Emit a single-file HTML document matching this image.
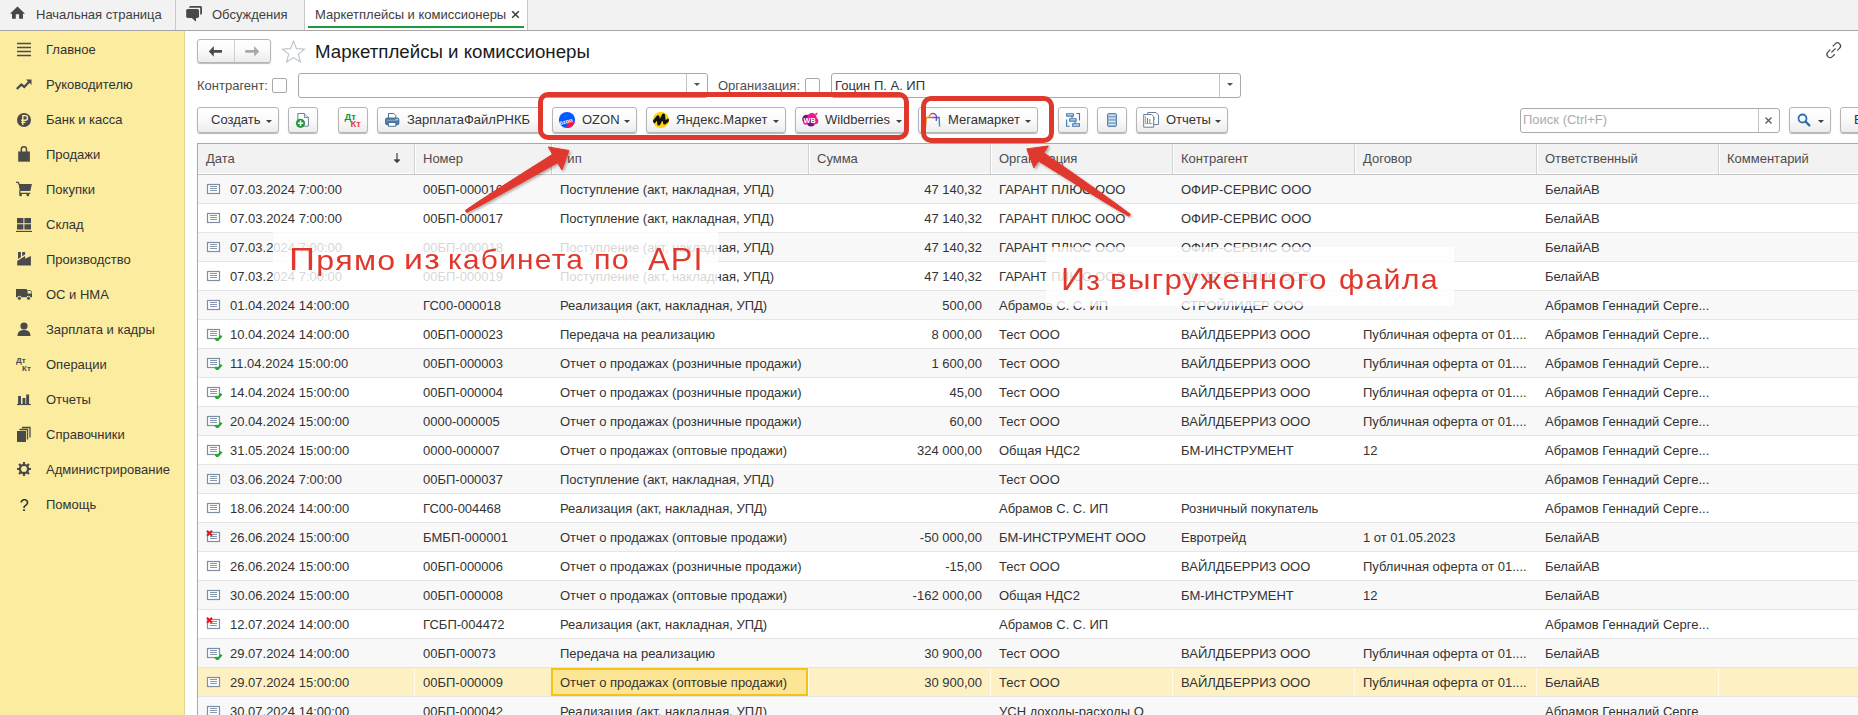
<!DOCTYPE html>
<html><head><meta charset="utf-8">
<style>
*{box-sizing:border-box;margin:0;padding:0}
html,body{width:1858px;height:715px;overflow:hidden;background:#fff;font-family:"Liberation Sans",sans-serif;font-size:13px;color:#333}
.abs{position:absolute}
svg{position:absolute;display:block}
#tabs{position:absolute;left:0;top:0;width:1858px;height:31px;background:#f2f2f2;border-bottom:1px solid #a6a6a6}
.tab{position:absolute;top:0;height:30px;line-height:30px;color:#404040;font-size:13px;white-space:nowrap}
.tsep{position:absolute;top:0;width:1px;height:30px;background:#c8c8c8}
#side{position:absolute;left:0;top:31px;width:185px;height:684px;background:#fbeca0;border-right:1px solid #e3d58e}
.si{position:absolute;left:46px;color:#333;font-size:13px;line-height:15px;white-space:nowrap}
.sic{position:absolute;left:16px}
.btn{position:absolute;top:107px;height:26px;border:1px solid #b5b5b5;border-radius:3px;background:linear-gradient(#fff 0%,#fafafa 50%,#ececec 100%);box-shadow:0 1px 1px rgba(0,0,0,.28);white-space:nowrap;color:#333;font-size:13px;line-height:24px}
.bt{position:absolute;top:0}
.dd{position:absolute;top:12px;width:0;height:0;border-left:3px solid transparent;border-right:3px solid transparent;border-top:3.5px solid #404040}
.inp{position:absolute;top:73px;height:25px;border:1px solid #a9a9a9;border-radius:3px;background:#fff}
.chk{position:absolute;top:78px;width:15px;height:15px;border:1px solid #a8a8a8;border-radius:2px;background:#fff}
.lbl{position:absolute;top:78px;line-height:15px;color:#4d4d4d;font-size:13px;white-space:nowrap}
#gridbox{position:absolute;left:197px;top:143px;width:1661px;height:572px;border-left:1px solid #a9a9a9;border-top:1px solid #a9a9a9}
.hd{position:absolute;left:198px;top:144px;height:31px;width:1660px;background:#f2f2f2;border-bottom:1px solid #c4c4c4;box-shadow:inset 0 -1px 0 #fff}
.hc{position:absolute;top:144px;height:30px;line-height:30px;color:#4d4d4d;white-space:nowrap}
.hs{position:absolute;top:144px;width:2px;height:30px;border-left:1px solid #d2d2d2;border-right:1px solid #fff}
.row{position:absolute;left:198px;width:1660px;height:29px}
.row>*{margin-left:-198px}
.row::after{content:"";position:absolute;left:0;right:0;bottom:0;height:1px;background:#e6e6e6}
.row.g{background:#f8f8f8}
.row.sel{background:#fdf1c4}
.vs{position:absolute;top:0;width:1px;height:28px;background:#fffbe8}
.selcell{position:absolute;left:551px;top:0;width:257px;height:28px;border:2px solid #f5c318;background:#fde596}
.icw{position:absolute;top:7px;width:18px;height:14px}
.c{position:absolute;top:0;height:29px;line-height:29px;white-space:nowrap;color:#333}
.r{text-align:right}
.redbox{position:absolute;border:5px solid #e0382d;border-radius:10px}
.note{position:absolute;background:rgba(255,255,255,.8)}
.notet{position:absolute;color:#e0382d;white-space:nowrap;font-family:"Liberation Sans",sans-serif;font-size:28.5px;line-height:30px;letter-spacing:1.2px;transform-origin:0 0}
</style></head><body>
<div id="tabs">
  <svg style="left:0;top:0" width="30" height="30" viewBox="0 0 30 30"><path d="M17.5 6.5L25 13.7H23V18.8H19.1V14.2H15.8V18.8H12V13.7H10z" fill="#484848"/></svg>
  <div class="tab" style="left:36px">Начальная страница</div>
  <div class="tsep" style="left:175px"></div>
  <svg style="left:178px;top:0" width="30" height="30" viewBox="178 0 30 30"><rect x="186.2" y="9" width="12.8" height="8.9" rx="1.6" fill="#484848"/><path d="M191.3 17.5L196 21.8V17.5z" fill="#484848"/><path d="M189.1 7.8V7.6Q189.1 6.1 190.6 6.1H200.5Q202 6.1 202 7.6V13.3Q202 14.7 200.6 14.7H200.2V7.8z" fill="#484848"/></svg>
  <div class="tab" style="left:212px">Обсуждения</div>
  <div class="tsep" style="left:304px"></div>
  <div class="abs" style="left:305px;top:0;width:222px;height:30px;background:#fff"></div>
  <div class="tab" style="left:315px">Маркетплейсы и комиссионеры</div>
  <svg style="left:511px;top:10px" width="9" height="9" viewBox="0 0 9 9"><path d="M1.2 1.2l6.6 6.6M7.8 1.2L1.2 7.8" stroke="#404040" stroke-width="1.6"/></svg>
  <div class="abs" style="left:308px;top:26px;width:216px;height:2px;background:#1a9c3e"></div>
  <div class="tsep" style="left:527px"></div>
</div>
<div id="side">
<div class="si" style="top:11px">Главное</div>
<svg class="sic" style="top:10px" width="16" height="16" viewBox="0 0 16 16"><path d="M1 2.5h14M1 6.5h14M1 10.5h14M1 14.5h14" stroke="#4a4a4a" stroke-width="1.3"/></svg>
<div class="si" style="top:46px">Руководителю</div>
<svg class="sic" style="top:45px" width="16" height="16" viewBox="0 0 16 16"><path d="M0.8 13l4.5-4.5 3 2.5 4.8-5.2" fill="none" stroke="#4a4a4a" stroke-width="2.3"/><path d="M10 3.5h5.5v5.5z" fill="#4a4a4a"/></svg>
<div class="si" style="top:81px">Банк и касса</div>
<svg class="sic" style="top:80px" width="16" height="16" viewBox="0 0 16 16"><circle cx="8" cy="9" r="7" fill="#4a4a4a"/><path d="M6.8 14V4.6h2.4a2.3 2.3 0 0 1 0 4.6H5.2M5.2 11.4h4.2" fill="none" stroke="#fbeca0" stroke-width="1.4"/></svg>
<div class="si" style="top:116px">Продажи</div>
<svg class="sic" style="top:115px" width="16" height="16" viewBox="0 0 16 16"><path d="M2.2 5.5h11.7v10.2H2.2z" fill="#4a4a4a"/><path d="M5.3 6.5V3.4a2.6 2.6 0 0 1 5.2 0v3.1" fill="none" stroke="#4a4a4a" stroke-width="1.5"/></svg>
<div class="si" style="top:151px">Покупки</div>
<svg class="sic" style="top:150px" width="16" height="16" viewBox="0 0 16 16"><path d="M0 1.3H2.3L3.6 4" fill="none" stroke="#4a4a4a" stroke-width="1.3"/><path d="M2.6 2.9H15.9L14.3 9.9H3.8z" fill="#4a4a4a"/><path d="M3.8 9.5V12.3H14.3" fill="none" stroke="#4a4a4a" stroke-width="1.2"/><circle cx="4.6" cy="13.9" r="1.4" fill="#4a4a4a"/><circle cx="11.8" cy="13.9" r="1.4" fill="#4a4a4a"/></svg>
<div class="si" style="top:186px">Склад</div>
<svg class="sic" style="top:185px" width="16" height="16" viewBox="0 0 16 16"><path d="M1 2h6.4v5.3H1zM8.4 2H15v5.3H8.4zM1 8.3h6.4v5.3H1zM8.4 8.3H15v5.3H8.4z" fill="#4a4a4a"/><path d="M0 15.6h16" stroke="#4a4a4a" stroke-width="1.5"/></svg>
<div class="si" style="top:221px">Производство</div>
<svg class="sic" style="top:220px" width="16" height="16" viewBox="0 0 16 16"><path d="M1.2 14.5V10L9.1 4.9V7.8L14.9 4.9V14.5z" fill="#4a4a4a"/><path d="M2 1H4.9V6.2L2 8z" fill="#4a4a4a"/><path d="M6.2 1H9.1V3.4L6.2 5.3z" fill="#4a4a4a"/></svg>
<div class="si" style="top:256px">ОС и НМА</div>
<svg class="sic" style="top:255px" width="16" height="16" viewBox="0 0 16 16"><path d="M0 3h10.8v8.2H0zM10.8 4.3h3.9l1.6 2v4.9h-5.5z" fill="#4a4a4a"/><path d="M11.6 5.1h2.8l1 1.3v1.2h-3.8z" fill="#fbeca0"/><circle cx="3.4" cy="12.3" r="2" fill="#4a4a4a" stroke="#fbeca0" stroke-width="1"/><circle cx="12.5" cy="12.3" r="2" fill="#4a4a4a" stroke="#fbeca0" stroke-width="1"/></svg>
<div class="si" style="top:291px">Зарплата и кадры</div>
<svg class="sic" style="top:290px" width="16" height="16" viewBox="0 0 16 16"><circle cx="8" cy="5" r="3.6" fill="#4a4a4a"/><path d="M1.5 15c0-4.5 3-6 6.5-6s6.5 1.5 6.5 6z" fill="#4a4a4a"/></svg>
<div class="si" style="top:326px">Операции</div>
<svg class="sic" style="top:325px" width="16" height="16" viewBox="0 0 16 16"><text x="0" y="7" font-family="Liberation Sans" font-weight="bold" font-size="8" fill="#4a4a4a">Дт</text><text x="6" y="15" font-family="Liberation Sans" font-weight="bold" font-size="8" fill="#4a4a4a">Кт</text></svg>
<div class="si" style="top:361px">Отчеты</div>
<svg class="sic" style="top:360px" width="16" height="16" viewBox="0 0 16 16"><path d="M2.1 4.9H5V13H2.1zM6.5 7H9.4V13H6.5zM10.2 3.4H13.1V13H10.2z" fill="#4a4a4a"/><path d="M1 13.5h13.8" stroke="#4a4a4a" stroke-width="1.1"/></svg>
<div class="si" style="top:396px">Справочники</div>
<svg class="sic" style="top:395px" width="16" height="16" viewBox="0 0 16 16"><path d="M1 5h9v11H1z" fill="#4a4a4a"/><path d="M3.5 3.5h8v10M6 1.5h8v10" fill="none" stroke="#4a4a4a" stroke-width="1.3"/></svg>
<div class="si" style="top:431px">Администрирование</div>
<svg class="sic" style="top:430px" width="16" height="16" viewBox="0 0 16 16"><g transform="translate(8 8)"><circle r="4.1" fill="none" stroke="#4a4a4a" stroke-width="2.3"/><path d="M0-7v2.6M0 4.4V7M-7 0h2.6M4.4 0H7M-4.95-4.95l1.8 1.8M3.15 3.15l1.8 1.8M-4.95 4.95l1.8-1.8M3.15-3.15l1.8-1.8" stroke="#4a4a4a" stroke-width="2.2"/></g></svg>
<div class="si" style="top:466px">Помощь</div>
<svg class="sic" style="top:465px" width="16" height="16" viewBox="0 0 16 16"><text x="3.8" y="14.5" font-family="Liberation Sans" font-size="16" fill="#222">?</text></svg>
</div>

<!-- nav -->
<div class="btn" style="left:197px;top:39px;width:74px;height:24px"></div>
<div class="abs" style="left:234px;top:40px;width:1px;height:22px;background:#d0d0d0"></div>
<svg style="left:208px;top:45px" width="16" height="13" viewBox="0 0 16 13"><path d="M0.8 6.4L5.8 1.1V5h8.2v2.8H5.8v3.9z" fill="#4a4a4a"/></svg>
<svg style="left:244px;top:45px" width="16" height="13" viewBox="0 0 16 13"><path d="M15.2 6.4L10.2 1.1V5H1.2v2.8h9v3.9z" fill="#a9a9a9"/></svg>
<svg style="left:281px;top:40px" width="25" height="23" viewBox="0 0 25 23"><path d="M12.5 1l3 7.6 8 .5-6.2 5.1 2.1 7.8-6.9-4.4-6.9 4.4 2.1-7.8L1.5 9.1l8-.5z" fill="#fff" stroke="#b9c3cc" stroke-width="1.1"/></svg>
<div class="abs" style="left:315px;top:41px;font-size:18.7px;line-height:22px;color:#1a1a1a;white-space:nowrap">Маркетплейсы и комиссионеры</div>
<svg style="left:1820px;top:38px" width="26" height="24" viewBox="1820 38 26 24"><path d="M1832.7 46.3L1835.2 43.8A3.1 3.1 0 0 1 1839.6 48.2L1837.2 50.7M1834.8 54.2L1832.3 56.6A3.1 3.1 0 0 1 1827.9 52.2L1830.3 49.7M1831.4 52.5L1835.6 48.3" fill="none" stroke="#4a4a4a" stroke-width="1.2"/></svg>

<!-- filter row -->
<div class="lbl" style="left:197px">Контрагент:</div>
<div class="chk" style="left:272px"></div>
<div class="inp" style="left:298px;width:410px"></div>
<div class="abs" style="left:686px;top:74px;width:1px;height:23px;background:#c4c4c4"></div>
<div class="dd" style="left:694px;top:83px;border-top-color:#555"></div>
<div class="lbl" style="left:718px">Организация:</div>
<div class="chk" style="left:805px"></div>
<div class="inp" style="left:831px;width:410px"></div>
<div class="abs" style="left:1219px;top:74px;width:1px;height:23px;background:#c4c4c4"></div>
<div class="dd" style="left:1227px;top:83px;border-top-color:#555"></div>
<div class="lbl" style="left:835px;color:#333">Гоцин П. А. ИП</div>

<!-- toolbar -->
<div class="btn" style="left:197px;width:82px"><span class="bt" style="left:13px">Создать</span><i class="dd" style="left:68px"></i></div>
<div class="btn" style="left:288px;width:30px"><svg style="left:0;top:0" width="28" height="24" viewBox="289 108 28 24"><path d="M297.8 113.5h6.6l4 4v8.6h-10.6z" fill="#fff" stroke="#6b7f99" stroke-width="1"/><path d="M304.4 113.5v4h4" fill="#dfe6ee" stroke="#6b7f99" stroke-width="0.9"/><circle cx="300.5" cy="123.3" r="4.6" fill="#1f9a3a"/><path d="M300.5 120.6v5.4M297.8 123.3h5.4" stroke="#fff" stroke-width="1.5"/></svg></div>
<div class="btn" style="left:338px;width:30px"><svg style="left:0;top:0" width="28" height="24" viewBox="339 108 28 24"><text x="344.6" y="119.8" font-family="Liberation Sans" font-weight="bold" font-size="9.4" fill="#12953c">Дт</text><text x="350.6" y="127" font-family="Liberation Sans" font-weight="bold" font-size="9.4" fill="#e23f3a">Кт</text></svg></div>
<div class="btn" style="left:377px;width:165px"><svg style="left:0;top:0" width="28" height="24" viewBox="378 108 28 24"><path d="M388.5 113.5h5.3l2 2v3h-7.3z" fill="#fff" stroke="#4a6f96" stroke-width="1"/><rect x="385.5" y="118" width="13.4" height="6.8" rx="1.6" fill="#4b78a6" stroke="#3a628c" stroke-width="0.8"/><path d="M386.8 120.2h10.8" stroke="#9dbbd8" stroke-width="0.8"/><path d="M395.6 119.3h1.2M397.3 119.3h.8" stroke="#fff" stroke-width="0.9"/><path d="M388.5 122.5h7.3v3.8h-7.3z" fill="#fff" stroke="#4a6f96" stroke-width="1"/></svg><span class="bt" style="left:29px">ЗарплатаФайлРНКБ</span></div>
<div class="btn" style="left:552px;width:85px"><svg style="left:0;top:0" width="28" height="24" viewBox="553 108 28 24"><defs><clipPath id="oc"><circle cx="567" cy="120" r="8.1"/></clipPath></defs><circle cx="567" cy="120" r="8.1" fill="#005bff"/><path d="M567.8 119.5L576 122.8 576 130 565.8 130z" fill="#f91155" clip-path="url(#oc)"/><text x="559" y="123.2" transform="rotate(-14 567 121)" font-family="Liberation Sans" font-weight="bold" font-size="5.8" fill="#fff">ozon</text></svg><span class="bt" style="left:29px">OZON</span><i class="dd" style="left:71px"></i></div>
<div class="btn" style="left:646px;width:140px"><svg style="left:5px;top:4px" width="18" height="17" viewBox="0 0 18 17"><defs><clipPath id="yc"><circle cx="8.9" cy="8" r="8.1"/></clipPath></defs><circle cx="8.9" cy="8" r="8.1" fill="#fdd20a"/><path d="M1.5 10.5L6 4.8 6.8 12 11.5 3 12.5 11 17 7.5" fill="none" stroke="#111" stroke-width="3" stroke-linejoin="round" clip-path="url(#yc)"/></svg><span class="bt" style="left:29px">Яндекс.Маркет</span><i class="dd" style="left:126px"></i></div>
<div class="btn" style="left:795px;width:113px"><svg style="left:5px;top:3px" width="19" height="18" viewBox="0 0 19 18"><circle cx="5.5" cy="8" r="4.3" fill="#7d0f7e"/><circle cx="11" cy="6.5" r="4.6" fill="#ec1a8c"/><circle cx="10" cy="11.5" r="4" fill="#7d0f7e"/><circle cx="14" cy="10" r="3.3" fill="#ec1a8c"/><circle cx="4.5" cy="11.5" r="2.3" fill="#ec1a8c"/><circle cx="15.5" cy="2.8" r="1" fill="#ec1a8c"/><text x="2.6" y="12.3" font-family="Liberation Sans" font-weight="bold" font-size="7.2" fill="#fff">WB</text></svg><span class="bt" style="left:29px">Wildberries</span><i class="dd" style="left:100px"></i></div>
<div class="btn" style="left:918px;width:120px"><svg style="left:0;top:0" width="28" height="24" viewBox="919 108 28 24"><defs><linearGradient id="mg" gradientUnits="userSpaceOnUse" x1="925" y1="0" x2="940" y2="0"><stop offset="0" stop-color="#f7a21b"/><stop offset=".35" stop-color="#e0762e"/><stop offset=".6" stop-color="#8a3fc6"/><stop offset=".8" stop-color="#5a48c8"/><stop offset="1" stop-color="#1cb68e"/></linearGradient></defs><path d="M925.6 126.5L926.4 117.5H939.2L939.6 126.5M929.2 117.5A3.7 4 0 0 1 936.6 117.5L936.2 120.8" fill="none" stroke="url(#mg)" stroke-width="1.4"/></svg><span class="bt" style="left:29px">Мегамаркет</span><i class="dd" style="left:106px"></i></div>
<div class="btn" style="left:1058px;width:30px"><svg style="left:0;top:0" width="28" height="24" viewBox="1059 108 28 24"><path d="M1066.7 113.7h6.6v2.4h-6.6zM1069.7 118.7h6.4v2.4h-6.4zM1072.7 123.7h6.7v2.6h-6.7z" fill="#cfe0f2" stroke="#3f78b0" stroke-width="1.1"/><path d="M1072 116.5v2.2M1075 121.6v2.2M1076.5 113.5h3v7M1066.6 119.5v6.8h3" fill="none" stroke="#3f78b0" stroke-width="1.1"/></svg></div>
<div class="btn" style="left:1097px;width:30px"><svg style="left:0;top:0" width="28" height="24" viewBox="1098 108 28 24"><rect x="1107.5" y="113.5" width="9" height="13" rx="1.5" fill="#88abce" stroke="#5a86b0" stroke-width="1"/><path d="M1108.5 115.2h7M1108.5 118.3h7M1108.5 121.5h7M1108.5 124.6h7" stroke="#d9e7f4" stroke-width="1.3"/></svg></div>
<div class="btn" style="left:1136px;width:92px"><svg style="left:0;top:0" width="28" height="24" viewBox="1137 108 28 24"><path d="M1147.8 112.5h8.2l2.5 2.5v9.5h-10.7z" fill="#fff" stroke="#6d8099" stroke-width="1"/><path d="M1154 117v3" stroke="#2fae3a" stroke-width="1"/><path d="M1143.7 114.5h8l2 2v10.7h-10z" fill="#fff" stroke="#6d8099" stroke-width="1"/><path d="M1145.3 116v7.6h7.2" fill="none" stroke="#7a8a9a" stroke-width="0.8"/><path d="M1147.4 118v5.2" stroke="#ea3a2a" stroke-width="1"/><path d="M1149.8 119v4.2" stroke="#2fae3a" stroke-width="1"/></svg><span class="bt" style="left:29px">Отчеты</span><i class="dd" style="left:78px"></i></div>

<div class="inp" style="left:1520px;top:108px;width:260px;height:25px"></div>
<div class="abs" style="left:1758px;top:109px;width:1px;height:23px;background:#c4c4c4"></div>
<div class="lbl" style="left:1523px;top:112px;color:#ababab">Поиск (Ctrl+F)</div>
<svg style="left:1764px;top:116px" width="9" height="9" viewBox="0 0 9 9"><path d="M1.5 1.5l6 6M7.5 1.5l-6 6" stroke="#555" stroke-width="1.2"/></svg>
<div class="btn" style="left:1789px;width:42px"><svg style="left:7px;top:5px" width="14" height="14" viewBox="0 0 14 14"><circle cx="5.5" cy="5.5" r="4" fill="none" stroke="#2a72b0" stroke-width="1.8"/><path d="M8.5 8.5l3.8 3.8" stroke="#2a72b0" stroke-width="2.4" stroke-linecap="round"/></svg><i class="dd" style="left:28px"></i></div>
<div class="btn" style="left:1840px;width:60px"><span class="bt" style="left:13px">Еще</span></div>

<!-- grid -->
<div id="gridbox"></div>
<div class="hd"></div>
<div class="hs" style="left:414px"></div>
<div class="hs" style="left:551px"></div>
<div class="hs" style="left:808px"></div>
<div class="hs" style="left:990px"></div>
<div class="hs" style="left:1172px"></div>
<div class="hs" style="left:1354px"></div>
<div class="hs" style="left:1536px"></div>
<div class="hs" style="left:1718px"></div>
<div class="hc" style="left:206px">Дата</div>
<div class="hc" style="left:423px">Номер</div>
<div class="hc" style="left:560px">Тип</div>
<div class="hc" style="left:817px">Сумма</div>
<div class="hc" style="left:999px">Организация</div>
<div class="hc" style="left:1181px">Контрагент</div>
<div class="hc" style="left:1363px">Договор</div>
<div class="hc" style="left:1545px">Ответственный</div>
<div class="hc" style="left:1727px">Комментарий</div>
<svg style="left:393px;top:152px" width="8" height="12" viewBox="0 0 8 12"><path d="M4 1v9" stroke="#404040" stroke-width="1.2"/><path d="M1.2 7.8L4 10.8 6.8 7.8z" fill="#404040" stroke="#404040" stroke-width="0.8" stroke-linejoin="round"/></svg>
<div class="row g" style="top:175px">
<div class="icw" style="left:206px"><svg class="ri" width="18" height="14" viewBox="0 0 18 14"><rect x="1.5" y="2.5" width="12" height="9" fill="#fff" stroke="#7d8ea6" stroke-width="1.2"/><path d="M4 4.5h7M4 6.5h7M4 8.5h7" stroke="#8797ad" stroke-width="1"/></svg></div>
<div class="c" style="left:230px">07.03.2024 7:00:00</div>
<div class="c" style="left:423px">00БП-000016</div>
<div class="c" style="left:560px">Поступление (акт, накладная, УПД)</div>
<div class="c r" style="right:876px">47 140,32</div>
<div class="c" style="left:999px">ГАРАНТ ПЛЮС ООО</div>
<div class="c" style="left:1181px">ОФИР-СЕРВИС ООО</div>
<div class="c" style="left:1363px"></div>
<div class="c" style="left:1545px">БелайАВ</div>
</div>
<div class="row" style="top:204px">
<div class="icw" style="left:206px"><svg class="ri" width="18" height="14" viewBox="0 0 18 14"><rect x="1.5" y="2.5" width="12" height="9" fill="#fff" stroke="#7d8ea6" stroke-width="1.2"/><path d="M4 4.5h7M4 6.5h7M4 8.5h7" stroke="#8797ad" stroke-width="1"/></svg></div>
<div class="c" style="left:230px">07.03.2024 7:00:00</div>
<div class="c" style="left:423px">00БП-000017</div>
<div class="c" style="left:560px">Поступление (акт, накладная, УПД)</div>
<div class="c r" style="right:876px">47 140,32</div>
<div class="c" style="left:999px">ГАРАНТ ПЛЮС ООО</div>
<div class="c" style="left:1181px">ОФИР-СЕРВИС ООО</div>
<div class="c" style="left:1363px"></div>
<div class="c" style="left:1545px">БелайАВ</div>
</div>
<div class="row g" style="top:233px">
<div class="icw" style="left:206px"><svg class="ri" width="18" height="14" viewBox="0 0 18 14"><rect x="1.5" y="2.5" width="12" height="9" fill="#fff" stroke="#7d8ea6" stroke-width="1.2"/><path d="M4 4.5h7M4 6.5h7M4 8.5h7" stroke="#8797ad" stroke-width="1"/></svg></div>
<div class="c" style="left:230px">07.03.2024 7:00:00</div>
<div class="c" style="left:423px">00БП-000018</div>
<div class="c" style="left:560px">Поступление (акт, накладная, УПД)</div>
<div class="c r" style="right:876px">47 140,32</div>
<div class="c" style="left:999px">ГАРАНТ ПЛЮС ООО</div>
<div class="c" style="left:1181px">ОФИР-СЕРВИС ООО</div>
<div class="c" style="left:1363px"></div>
<div class="c" style="left:1545px">БелайАВ</div>
</div>
<div class="row" style="top:262px">
<div class="icw" style="left:206px"><svg class="ri" width="18" height="14" viewBox="0 0 18 14"><rect x="1.5" y="2.5" width="12" height="9" fill="#fff" stroke="#7d8ea6" stroke-width="1.2"/><path d="M4 4.5h7M4 6.5h7M4 8.5h7" stroke="#8797ad" stroke-width="1"/></svg></div>
<div class="c" style="left:230px">07.03.2024 7:00:00</div>
<div class="c" style="left:423px">00БП-000019</div>
<div class="c" style="left:560px">Поступление (акт, накладная, УПД)</div>
<div class="c r" style="right:876px">47 140,32</div>
<div class="c" style="left:999px">ГАРАНТ ПЛЮС ООО</div>
<div class="c" style="left:1181px">ОФИР-СЕРВИС ООО</div>
<div class="c" style="left:1363px"></div>
<div class="c" style="left:1545px">БелайАВ</div>
</div>
<div class="row g" style="top:291px">
<div class="icw" style="left:206px"><svg class="ri" width="18" height="14" viewBox="0 0 18 14"><rect x="1.5" y="2.5" width="12" height="9" fill="#fff" stroke="#7d8ea6" stroke-width="1.2"/><path d="M4 4.5h7M4 6.5h7M4 8.5h7" stroke="#8797ad" stroke-width="1"/></svg></div>
<div class="c" style="left:230px">01.04.2024 14:00:00</div>
<div class="c" style="left:423px">ГС00-000018</div>
<div class="c" style="left:560px">Реализация (акт, накладная, УПД)</div>
<div class="c r" style="right:876px">500,00</div>
<div class="c" style="left:999px">Абрамов С. С. ИП</div>
<div class="c" style="left:1181px">СТРОЙЛИДЕР ООО</div>
<div class="c" style="left:1363px"></div>
<div class="c" style="left:1545px">Абрамов Геннадий Серге...</div>
</div>
<div class="row" style="top:320px">
<div class="icw" style="left:206px"><svg class="ri" width="18" height="14" viewBox="0 0 18 14"><rect x="1.5" y="2.5" width="12" height="9" fill="#fff" stroke="#7d8ea6" stroke-width="1.2"/><path d="M4 4.5h7M4 6.5h7M4 8.5h7" stroke="#8797ad" stroke-width="1"/><path d="M9.3 11.2l2 2.2 4.3-4.6" fill="none" stroke="#1aaa2a" stroke-width="2.2" stroke-linejoin="round"/></svg></div>
<div class="c" style="left:230px">10.04.2024 14:00:00</div>
<div class="c" style="left:423px">00БП-000023</div>
<div class="c" style="left:560px">Передача на реализацию</div>
<div class="c r" style="right:876px">8 000,00</div>
<div class="c" style="left:999px">Тест ООО</div>
<div class="c" style="left:1181px">ВАЙЛДБЕРРИЗ ООО</div>
<div class="c" style="left:1363px">Публичная оферта от 01....</div>
<div class="c" style="left:1545px">Абрамов Геннадий Серге...</div>
</div>
<div class="row g" style="top:349px">
<div class="icw" style="left:206px"><svg class="ri" width="18" height="14" viewBox="0 0 18 14"><rect x="1.5" y="2.5" width="12" height="9" fill="#fff" stroke="#7d8ea6" stroke-width="1.2"/><path d="M4 4.5h7M4 6.5h7M4 8.5h7" stroke="#8797ad" stroke-width="1"/><path d="M9.3 11.2l2 2.2 4.3-4.6" fill="none" stroke="#1aaa2a" stroke-width="2.2" stroke-linejoin="round"/></svg></div>
<div class="c" style="left:230px">11.04.2024 15:00:00</div>
<div class="c" style="left:423px">00БП-000003</div>
<div class="c" style="left:560px">Отчет о продажах (розничные продажи)</div>
<div class="c r" style="right:876px">1 600,00</div>
<div class="c" style="left:999px">Тест ООО</div>
<div class="c" style="left:1181px">ВАЙЛДБЕРРИЗ ООО</div>
<div class="c" style="left:1363px">Публичная оферта от 01....</div>
<div class="c" style="left:1545px">Абрамов Геннадий Серге...</div>
</div>
<div class="row" style="top:378px">
<div class="icw" style="left:206px"><svg class="ri" width="18" height="14" viewBox="0 0 18 14"><rect x="1.5" y="2.5" width="12" height="9" fill="#fff" stroke="#7d8ea6" stroke-width="1.2"/><path d="M4 4.5h7M4 6.5h7M4 8.5h7" stroke="#8797ad" stroke-width="1"/><path d="M9.3 11.2l2 2.2 4.3-4.6" fill="none" stroke="#1aaa2a" stroke-width="2.2" stroke-linejoin="round"/></svg></div>
<div class="c" style="left:230px">14.04.2024 15:00:00</div>
<div class="c" style="left:423px">00БП-000004</div>
<div class="c" style="left:560px">Отчет о продажах (розничные продажи)</div>
<div class="c r" style="right:876px">45,00</div>
<div class="c" style="left:999px">Тест ООО</div>
<div class="c" style="left:1181px">ВАЙЛДБЕРРИЗ ООО</div>
<div class="c" style="left:1363px">Публичная оферта от 01....</div>
<div class="c" style="left:1545px">Абрамов Геннадий Серге...</div>
</div>
<div class="row g" style="top:407px">
<div class="icw" style="left:206px"><svg class="ri" width="18" height="14" viewBox="0 0 18 14"><rect x="1.5" y="2.5" width="12" height="9" fill="#fff" stroke="#7d8ea6" stroke-width="1.2"/><path d="M4 4.5h7M4 6.5h7M4 8.5h7" stroke="#8797ad" stroke-width="1"/><path d="M9.3 11.2l2 2.2 4.3-4.6" fill="none" stroke="#1aaa2a" stroke-width="2.2" stroke-linejoin="round"/></svg></div>
<div class="c" style="left:230px">20.04.2024 15:00:00</div>
<div class="c" style="left:423px">0000-000005</div>
<div class="c" style="left:560px">Отчет о продажах (розничные продажи)</div>
<div class="c r" style="right:876px">60,00</div>
<div class="c" style="left:999px">Тест ООО</div>
<div class="c" style="left:1181px">ВАЙЛДБЕРРИЗ ООО</div>
<div class="c" style="left:1363px">Публичная оферта от 01....</div>
<div class="c" style="left:1545px">Абрамов Геннадий Серге...</div>
</div>
<div class="row" style="top:436px">
<div class="icw" style="left:206px"><svg class="ri" width="18" height="14" viewBox="0 0 18 14"><rect x="1.5" y="2.5" width="12" height="9" fill="#fff" stroke="#7d8ea6" stroke-width="1.2"/><path d="M4 4.5h7M4 6.5h7M4 8.5h7" stroke="#8797ad" stroke-width="1"/><path d="M9.3 11.2l2 2.2 4.3-4.6" fill="none" stroke="#1aaa2a" stroke-width="2.2" stroke-linejoin="round"/></svg></div>
<div class="c" style="left:230px">31.05.2024 15:00:00</div>
<div class="c" style="left:423px">0000-000007</div>
<div class="c" style="left:560px">Отчет о продажах (оптовые продажи)</div>
<div class="c r" style="right:876px">324 000,00</div>
<div class="c" style="left:999px">Общая НДС2</div>
<div class="c" style="left:1181px">БМ-ИНСТРУМЕНТ</div>
<div class="c" style="left:1363px">12</div>
<div class="c" style="left:1545px">Абрамов Геннадий Серге...</div>
</div>
<div class="row g" style="top:465px">
<div class="icw" style="left:206px"><svg class="ri" width="18" height="14" viewBox="0 0 18 14"><rect x="1.5" y="2.5" width="12" height="9" fill="#fff" stroke="#7d8ea6" stroke-width="1.2"/><path d="M4 4.5h7M4 6.5h7M4 8.5h7" stroke="#8797ad" stroke-width="1"/></svg></div>
<div class="c" style="left:230px">03.06.2024 7:00:00</div>
<div class="c" style="left:423px">00БП-000037</div>
<div class="c" style="left:560px">Поступление (акт, накладная, УПД)</div>
<div class="c" style="left:999px">Тест ООО</div>
<div class="c" style="left:1181px"></div>
<div class="c" style="left:1363px"></div>
<div class="c" style="left:1545px">Абрамов Геннадий Серге...</div>
</div>
<div class="row" style="top:494px">
<div class="icw" style="left:206px"><svg class="ri" width="18" height="14" viewBox="0 0 18 14"><rect x="1.5" y="2.5" width="12" height="9" fill="#fff" stroke="#7d8ea6" stroke-width="1.2"/><path d="M4 4.5h7M4 6.5h7M4 8.5h7" stroke="#8797ad" stroke-width="1"/></svg></div>
<div class="c" style="left:230px">18.06.2024 14:00:00</div>
<div class="c" style="left:423px">ГС00-004468</div>
<div class="c" style="left:560px">Реализация (акт, накладная, УПД)</div>
<div class="c" style="left:999px">Абрамов С. С. ИП</div>
<div class="c" style="left:1181px">Розничный покупатель</div>
<div class="c" style="left:1363px"></div>
<div class="c" style="left:1545px">Абрамов Геннадий Серге...</div>
</div>
<div class="row g" style="top:523px">
<div class="icw" style="left:206px"><svg class="ri" width="18" height="14" viewBox="0 0 18 14"><rect x="1.5" y="2.5" width="12" height="9" fill="#fff" stroke="#7d8ea6" stroke-width="1.2"/><path d="M4 4.5h7M4 6.5h7M4 8.5h7" stroke="#8797ad" stroke-width="1"/><path d="M1 0.8l5 5M6 0.8l-5 5" stroke="#e8141a" stroke-width="2"/></svg></div>
<div class="c" style="left:230px">26.06.2024 15:00:00</div>
<div class="c" style="left:423px">БМБП-000001</div>
<div class="c" style="left:560px">Отчет о продажах (оптовые продажи)</div>
<div class="c r" style="right:876px">-50 000,00</div>
<div class="c" style="left:999px">БМ-ИНСТРУМЕНТ ООО</div>
<div class="c" style="left:1181px">Евротрейд</div>
<div class="c" style="left:1363px">1 от 01.05.2023</div>
<div class="c" style="left:1545px">БелайАВ</div>
</div>
<div class="row" style="top:552px">
<div class="icw" style="left:206px"><svg class="ri" width="18" height="14" viewBox="0 0 18 14"><rect x="1.5" y="2.5" width="12" height="9" fill="#fff" stroke="#7d8ea6" stroke-width="1.2"/><path d="M4 4.5h7M4 6.5h7M4 8.5h7" stroke="#8797ad" stroke-width="1"/></svg></div>
<div class="c" style="left:230px">26.06.2024 15:00:00</div>
<div class="c" style="left:423px">00БП-000006</div>
<div class="c" style="left:560px">Отчет о продажах (розничные продажи)</div>
<div class="c r" style="right:876px">-15,00</div>
<div class="c" style="left:999px">Тест ООО</div>
<div class="c" style="left:1181px">ВАЙЛДБЕРРИЗ ООО</div>
<div class="c" style="left:1363px">Публичная оферта от 01....</div>
<div class="c" style="left:1545px">БелайАВ</div>
</div>
<div class="row g" style="top:581px">
<div class="icw" style="left:206px"><svg class="ri" width="18" height="14" viewBox="0 0 18 14"><rect x="1.5" y="2.5" width="12" height="9" fill="#fff" stroke="#7d8ea6" stroke-width="1.2"/><path d="M4 4.5h7M4 6.5h7M4 8.5h7" stroke="#8797ad" stroke-width="1"/></svg></div>
<div class="c" style="left:230px">30.06.2024 15:00:00</div>
<div class="c" style="left:423px">00БП-000008</div>
<div class="c" style="left:560px">Отчет о продажах (оптовые продажи)</div>
<div class="c r" style="right:876px">-162 000,00</div>
<div class="c" style="left:999px">Общая НДС2</div>
<div class="c" style="left:1181px">БМ-ИНСТРУМЕНТ</div>
<div class="c" style="left:1363px">12</div>
<div class="c" style="left:1545px">БелайАВ</div>
</div>
<div class="row" style="top:610px">
<div class="icw" style="left:206px"><svg class="ri" width="18" height="14" viewBox="0 0 18 14"><rect x="1.5" y="2.5" width="12" height="9" fill="#fff" stroke="#7d8ea6" stroke-width="1.2"/><path d="M4 4.5h7M4 6.5h7M4 8.5h7" stroke="#8797ad" stroke-width="1"/><path d="M1 0.8l5 5M6 0.8l-5 5" stroke="#e8141a" stroke-width="2"/></svg></div>
<div class="c" style="left:230px">12.07.2024 14:00:00</div>
<div class="c" style="left:423px">ГСБП-004472</div>
<div class="c" style="left:560px">Реализация (акт, накладная, УПД)</div>
<div class="c" style="left:999px">Абрамов С. С. ИП</div>
<div class="c" style="left:1181px"></div>
<div class="c" style="left:1363px"></div>
<div class="c" style="left:1545px">Абрамов Геннадий Серге...</div>
</div>
<div class="row g" style="top:639px">
<div class="icw" style="left:206px"><svg class="ri" width="18" height="14" viewBox="0 0 18 14"><rect x="1.5" y="2.5" width="12" height="9" fill="#fff" stroke="#7d8ea6" stroke-width="1.2"/><path d="M4 4.5h7M4 6.5h7M4 8.5h7" stroke="#8797ad" stroke-width="1"/><path d="M9.3 11.2l2 2.2 4.3-4.6" fill="none" stroke="#1aaa2a" stroke-width="2.2" stroke-linejoin="round"/></svg></div>
<div class="c" style="left:230px">29.07.2024 14:00:00</div>
<div class="c" style="left:423px">00БП-00073</div>
<div class="c" style="left:560px">Передача на реализацию</div>
<div class="c r" style="right:876px">30 900,00</div>
<div class="c" style="left:999px">Тест ООО</div>
<div class="c" style="left:1181px">ВАЙЛДБЕРРИЗ ООО</div>
<div class="c" style="left:1363px">Публичная оферта от 01....</div>
<div class="c" style="left:1545px">БелайАВ</div>
</div>
<div class="row sel" style="top:668px">
<div class="vs" style="left:414px"></div>
<div class="vs" style="left:551px"></div>
<div class="vs" style="left:808px"></div>
<div class="vs" style="left:990px"></div>
<div class="vs" style="left:1172px"></div>
<div class="vs" style="left:1354px"></div>
<div class="vs" style="left:1536px"></div>
<div class="vs" style="left:1718px"></div>
<div class="selcell"></div>
<div class="icw" style="left:206px"><svg class="ri" width="18" height="14" viewBox="0 0 18 14"><rect x="1.5" y="2.5" width="12" height="9" fill="#fff" stroke="#7d8ea6" stroke-width="1.2"/><path d="M4 4.5h7M4 6.5h7M4 8.5h7" stroke="#8797ad" stroke-width="1"/></svg></div>
<div class="c" style="left:230px">29.07.2024 15:00:00</div>
<div class="c" style="left:423px">00БП-000009</div>
<div class="c" style="left:560px">Отчет о продажах (оптовые продажи)</div>
<div class="c r" style="right:876px">30 900,00</div>
<div class="c" style="left:999px">Тест ООО</div>
<div class="c" style="left:1181px">ВАЙЛДБЕРРИЗ ООО</div>
<div class="c" style="left:1363px">Публичная оферта от 01....</div>
<div class="c" style="left:1545px">БелайАВ</div>
</div>
<div class="row g" style="top:697px">
<div class="icw" style="left:206px"><svg class="ri" width="18" height="14" viewBox="0 0 18 14"><rect x="1.5" y="2.5" width="12" height="9" fill="#fff" stroke="#7d8ea6" stroke-width="1.2"/><path d="M4 4.5h7M4 6.5h7M4 8.5h7" stroke="#8797ad" stroke-width="1"/></svg></div>
<div class="c" style="left:230px">30.07.2024 14:00:00</div>
<div class="c" style="left:423px">00БП-000042</div>
<div class="c" style="left:560px">Реализация (акт, накладная, УПД)</div>
<div class="c" style="left:999px">УСН доходы-расходы О</div>
<div class="c" style="left:1181px"></div>
<div class="c" style="left:1363px"></div>
<div class="c" style="left:1545px">Абрамов Геннадий Серге</div>
</div>

<!-- annotations -->
<div class="note" style="left:273px;top:232px;width:445px;height:57px"></div>
<div class="notet" style="left:289.3px;top:244px;transform:scaleX(1.1278)"><span style="font-size:32px">П</span>рямо</div>
<div class="notet" style="left:404.0px;top:244px;transform:scaleX(1.1852)">из</div>
<div class="notet" style="left:448.0px;top:244px;transform:scaleX(1.0472)">кабинета</div>
<div class="notet" style="left:594.0px;top:244px;transform:scaleX(1.069)">по</div>
<div class="notet" style="left:647.6px;top:244px;transform:scaleX(1.01)"><span style="font-size:32px">A</span><span style="font-size:32px">P</span><span style="font-size:32px">I</span></div>
<div class="note" style="left:1046px;top:247px;width:408px;height:59px"></div>
<div class="notet" style="left:1061.4px;top:264px;transform:scaleX(1.0458)"><span style="font-size:32px">И</span>з</div>
<div class="notet" style="left:1109.8px;top:264px;transform:scaleX(1.0979)">выгруженного</div>
<div class="notet" style="left:1339.4px;top:264px;transform:scaleX(1.0653)">файла</div>

<div class="redbox" style="left:538px;top:92px;width:371px;height:48px"></div>
<div class="redbox" style="left:921px;top:96px;width:133px;height:47px"></div>

<svg style="left:0;top:0" width="1858" height="715" viewBox="0 0 1858 715">
  <defs><filter id="sh" x="-10%" y="-10%" width="130%" height="130%"><feDropShadow dx="1.5" dy="1.5" stdDeviation="1" flood-color="#000" flood-opacity=".3"/></filter></defs>
  <path d="M466.64 212.57 L478.21 206.68 L489.62 200.51 L500.99 194.28 L512.34 188.01 L523.67 181.71 L534.99 175.39 L546.30 169.06 L557.61 162.71 L561.95 170.02 L569.00 150.50 L548.25 146.98 L552.59 154.29 L541.62 161.19 L530.66 168.11 L519.71 175.04 L508.76 181.99 L497.83 188.97 L486.93 195.99 L476.06 203.07 L465.36 210.43z" fill="#e0382d" stroke="#e0382d" stroke-width="1" stroke-linejoin="round" filter="url(#sh)"/>
  <path d="M1130.29 214.26 L1119.70 206.25 L1108.94 198.50 L1098.13 190.82 L1087.30 183.18 L1076.45 175.56 L1065.60 167.97 L1054.73 160.38 L1043.85 152.81 L1048.40 145.93 L1026.80 148.90 L1033.90 167.87 L1038.45 160.99 L1049.69 168.02 L1060.93 175.03 L1072.18 182.04 L1083.45 189.02 L1094.73 195.98 L1106.04 202.90 L1117.39 209.75 L1128.91 216.34z" fill="#e0382d" stroke="#e0382d" stroke-width="1" stroke-linejoin="round" filter="url(#sh)"/>
</svg>
</body></html>
